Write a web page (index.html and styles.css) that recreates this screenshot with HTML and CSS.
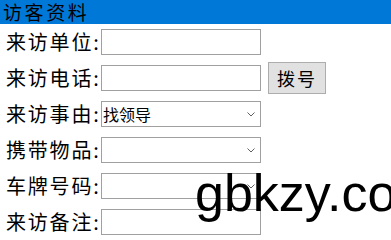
FILE: index.html
```html
<!DOCTYPE html>
<html lang="zh-CN">
<head>
<meta charset="utf-8">
<title>访客资料</title>
<link rel="stylesheet" href="styles.css">
</head>
<body>
<div class="page">
  <div class="title">访客资料</div>
  <form class="form">
    <div class="row">
      <label class="label">来访单位:</label>
      <input class="field" type="text">
    </div>
    <div class="row">
      <label class="label">来访电话:</label>
      <input class="field" type="text">
      <button class="btn" type="button">拨号</button>
    </div>
    <div class="row">
      <label class="label">来访事由:</label>
      <select class="field select"><option>找领导</option></select>
    </div>
    <div class="row">
      <label class="label">携带物品:</label>
      <select class="field select"><option></option></select>
    </div>
    <div class="row">
      <label class="label">车牌号码:</label>
      <select class="field select"><option></option></select>
    </div>
    <div class="row">
      <label class="label">来访备注:</label>
      <input class="field" type="text">
    </div>
  </form>
  <div class="watermark">gbkzy.co</div>
</div>
</body>
</html>
```

FILE: styles.css
```css
html, body {
  margin: 0;
  padding: 0;
  background: #ffffff;
}

.page {
  position: relative;
  width: 391px;
  height: 240px;
  overflow: hidden;
  font-family: "Noto Sans CJK SC", sans-serif;
  color: #000000;
}

.title {
  height: 24px;
  line-height: 24px;
  background: #0078d7;
  padding-left: 3px;
  font-size: 19px;
  letter-spacing: 2.6px;
  white-space: nowrap;
}

.form {
  display: flex;
  flex-direction: column;
  margin: 0;
}

.row {
  display: flex;
  align-items: center;
  height: 36px;
}

.label {
  flex: 0 0 101px;
  min-width: 0;
  box-sizing: border-box;
  padding-left: 6px;
  font-size: 20px;
  line-height: 24px;
  letter-spacing: 1.8px;
  white-space: nowrap;
}

.field {
  box-sizing: border-box;
  width: 160px;
  height: 26px;
  margin: 0;
  padding: 0 2px;
  border: 1px solid #a0a0a0;
  border-radius: 0;
  background: #ffffff;
  font-family: "Noto Sans CJK SC", sans-serif;
  font-size: 16px;
  color: #000000;
  outline: none;
}

.select {
  -webkit-appearance: none;
  appearance: none;
  padding: 0 0 0 1px;
  line-height: 22px;
  background-image: url("data:image/svg+xml;utf8,<svg xmlns='http://www.w3.org/2000/svg' width='8' height='5' viewBox='0 0 8 5'><path d='M0.5 0.5 L4 4 L7.5 0.5' fill='none' stroke='%23606060' stroke-width='1'/></svg>");
  background-repeat: no-repeat;
  background-position: right 5px center;
}

.btn {
  box-sizing: border-box;
  width: 58px;
  height: 32px;
  margin-left: 7px;
  padding: 0;
  border: 1px solid #adadad;
  border-radius: 0;
  background: #e1e1e1;
  font-family: "Noto Sans CJK SC", sans-serif;
  font-size: 18px;
  letter-spacing: 2px;
  color: #000000;
}

.watermark {
  position: absolute;
  left: 195px;
  top: 164px;
  font-family: "Liberation Sans", Arial, sans-serif;
  font-size: 52px;
  line-height: 58px;
  color: #000000;
  white-space: nowrap;
}
```
